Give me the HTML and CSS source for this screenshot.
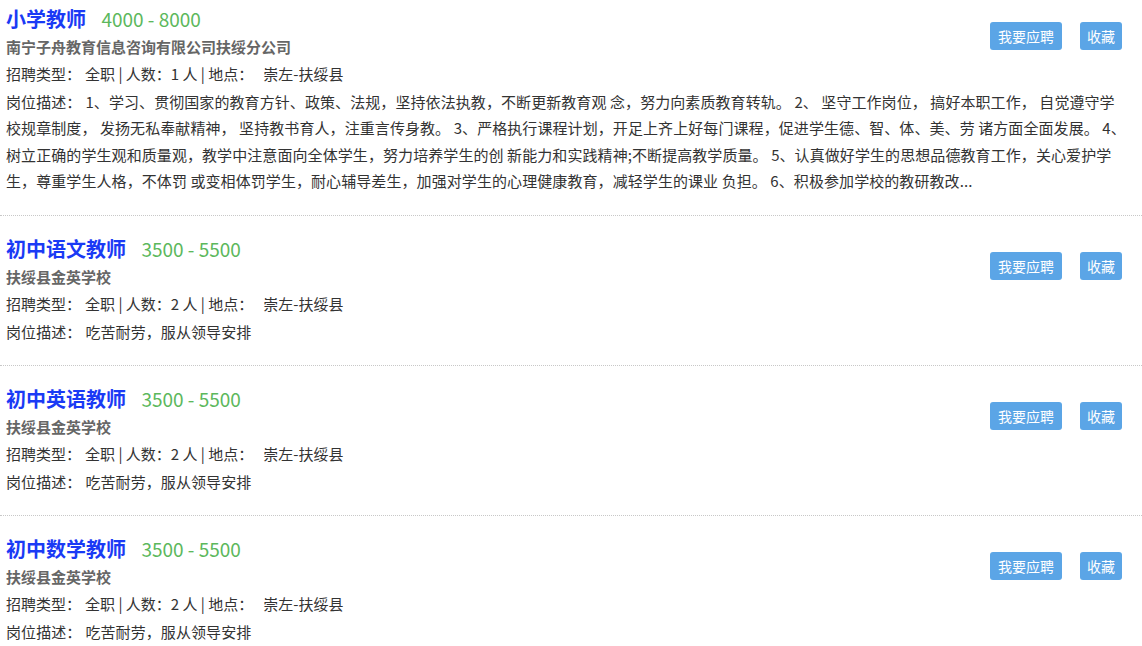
FILE: index.html
```html
<!DOCTYPE html>
<html lang="zh-CN">
<head>
<meta charset="utf-8">
<title>职位列表</title>
<link rel="stylesheet" href="styles.css">
</head>
<body>
<div class="job-list">
  <div class="job">
    <div class="job-head">
      <span class="job-title">小学教师</span>
      <span class="job-salary">4000 - 8000</span>
      <div class="job-actions">
        <a class="btn">我要应聘</a>
        <a class="btn btn-short">收藏</a>
      </div>
    </div>
    <div class="job-company">南宁子舟教育信息咨询有限公司扶绥分公司</div>
    <div class="job-info">招聘类型：<span class="gap"></span>全职 | 人数：1 人 | 地点：<span class="gap gap-wide"></span>崇左-扶绥县</div>
    <div class="job-desc">岗位描述：<span class="gap"></span>1、学习、贯彻国家的教育方针、政策、法规，坚持依法执教，不断更新教育观 念，努力向素质教育转轨。 2、 坚守工作岗位， 搞好本职工作， 自觉遵守学<br>校规章制度， 发扬无私奉献精神， 坚持教书育人，注重言传身教。 3、严格执行课程计划，开足上齐上好每门课程，促进学生德、智、体、美、劳 诸方面全面发展。 4、<br>树立正确的学生观和质量观，教学中注意面向全体学生，努力培养学生的创 新能力和实践精神;不断提高教学质量。 5、认真做好学生的思想品德教育工作，关心爱护学<br>生，尊重学生人格，不体罚 或变相体罚学生，耐心辅导差生，加强对学生的心理健康教育，减轻学生的课业 负担。 6、积极参加学校的教研教改...</div>
  </div>
  <div class="job">
    <div class="job-head">
      <span class="job-title">初中语文教师</span>
      <span class="job-salary">3500 - 5500</span>
      <div class="job-actions">
        <a class="btn">我要应聘</a>
        <a class="btn btn-short">收藏</a>
      </div>
    </div>
    <div class="job-company">扶绥县金英学校</div>
    <div class="job-info">招聘类型：<span class="gap"></span>全职 | 人数：2 人 | 地点：<span class="gap gap-wide"></span>崇左-扶绥县</div>
    <div class="job-desc">岗位描述：<span class="gap"></span>吃苦耐劳，服从领导安排</div>
  </div>
  <div class="job">
    <div class="job-head">
      <span class="job-title">初中英语教师</span>
      <span class="job-salary">3500 - 5500</span>
      <div class="job-actions">
        <a class="btn">我要应聘</a>
        <a class="btn btn-short">收藏</a>
      </div>
    </div>
    <div class="job-company">扶绥县金英学校</div>
    <div class="job-info">招聘类型：<span class="gap"></span>全职 | 人数：2 人 | 地点：<span class="gap gap-wide"></span>崇左-扶绥县</div>
    <div class="job-desc">岗位描述：<span class="gap"></span>吃苦耐劳，服从领导安排</div>
  </div>
  <div class="job">
    <div class="job-head">
      <span class="job-title">初中数学教师</span>
      <span class="job-salary">3500 - 5500</span>
      <div class="job-actions">
        <a class="btn">我要应聘</a>
        <a class="btn btn-short">收藏</a>
      </div>
    </div>
    <div class="job-company">扶绥县金英学校</div>
    <div class="job-info">招聘类型：<span class="gap"></span>全职 | 人数：2 人 | 地点：<span class="gap gap-wide"></span>崇左-扶绥县</div>
    <div class="job-desc">岗位描述：<span class="gap"></span>吃苦耐劳，服从领导安排</div>
  </div>
</div>
</body>
</html>
```

FILE: styles.css
```css
* { box-sizing: border-box; }

html, body {
  margin: 0;
  padding: 0;
  background: #fff;
}

body {
  font-family: "Noto Sans CJK SC", "Noto Sans", sans-serif;
  font-size: 15px;
  color: #333;
  overflow: hidden;
}

.job {
  padding: 18px 20px 20px 6px;
  border-bottom: 1px dotted #c8c8c8;
}

.job:first-child {
  padding-top: 4px;
}

.job-head {
  position: relative;
  height: 30px;
  line-height: 30px;
  white-space: nowrap;
}

.job-title {
  font-size: 20px;
  font-weight: 700;
  color: #1a3af5;
}

.job-salary {
  font-size: 19px;
  color: #5cb85c;
  margin-left: 12px;
}

.job-actions {
  position: absolute;
  top: 18px;
  right: 0;
  display: flex;
  gap: 18px;
}

.btn {
  display: block;
  height: 28px;
  line-height: 28px;
  padding: 0 8px;
  font-size: 14px;
  color: #fff;
  background: #5ba5e6;
  border-radius: 3px;
  cursor: pointer;
}

.btn-short {
  padding: 0 7px;
}

.job-company {
  font-size: 15px;
  font-weight: 700;
  color: #666;
  line-height: 26px;
}

.job-info {
  line-height: 27px;
}

.job-desc {
  margin-top: 2px;
  line-height: 26.4px;
  letter-spacing: 0.08px;
  white-space: nowrap;
}

.gap {
  display: inline-block;
  width: 4px;
}

.gap-wide {
  width: 10px;
}
```
